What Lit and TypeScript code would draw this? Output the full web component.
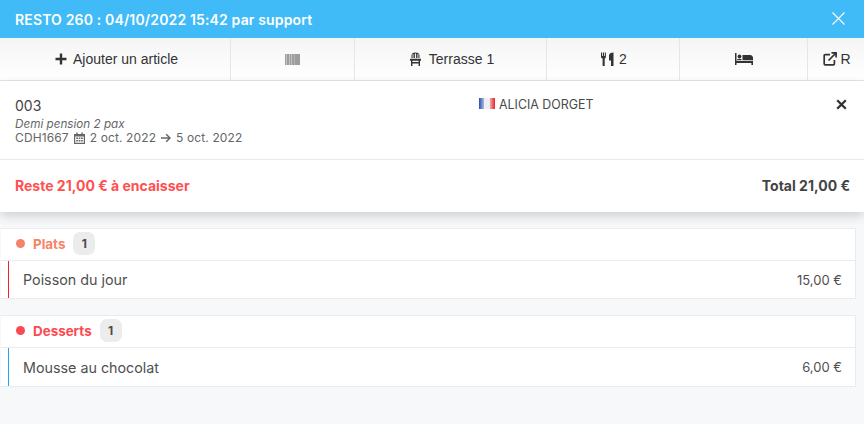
import { LitElement, html, css } from "lit";
import { customElement } from "lit/decorators.js";

@customElement("app-root")
export class AppRoot extends LitElement {
  static styles = css`
    :host { display: block; width: 864px; height: 424px; background: #f6f8fa; font-family: Inter, sans-serif; color: #4a4a4a; overflow: hidden; }
    svg { display: block; flex: none; }
    .top { height: 38px; background: #40bbf8; color: #fff; display: flex; align-items: center; justify-content: space-between; padding: 0 19px 0 15px; font-size: 14px; font-weight: 600; letter-spacing: .15px; box-sizing: border-box; }
    .top svg { margin-top: -2px; }
    .tools { height: 43px; box-sizing: border-box; display: flex; border-bottom: 1px solid #e6e6e6; background: linear-gradient(#f5f5f5, #fff); font-family: "Liberation Sans", sans-serif; font-size: 14px; color: #333; }
    .tool { display: flex; align-items: center; justify-content: center; gap: 6px; border-right: 1px solid #e6e6e6; box-sizing: border-box; }
    .tool:last-child { border-right: 0; }
    .t1 { width: 231px; padding-left: 3px; } .t2 { width: 124px; } .t3 { width: 192px; gap: 7px; padding-left: 2px; } .t4 { width: 133px; gap: 5px; padding-left: 2px; } .t5 { width: 128px; } .t6 { width: 56px; gap: 3px; padding-left: 2px; }
    .panel { background: #fff; height: 131px; box-shadow: 0 4px 10px rgba(0,0,0,.16); display: flex; flex-direction: column; }
    .info { height: 79px; box-sizing: border-box; border-bottom: 1px solid #e9e9e9; display: grid; grid-template-columns: 464px 1fr auto; padding: 16px 17px 0 15px; }
    .num { font-size: 14px; line-height: 18px; color: #444; }
    .sub { font-size: 11.7px; line-height: 14px; color: #666; font-style: italic; margin-top: 2px; }
    .ref { font-size: 12px; line-height: 14px; color: #666; display: flex; align-items: center; gap: 5px; letter-spacing: .12px; }
    .guest { display: flex; align-items: flex-start; gap: 4px; font-size: 12.4px; line-height: 16px; color: #4a4a4a; }
    .flag { width: 16px; height: 11px; margin-top: 1px; display: flex; box-sizing: border-box; }
    .flag i { flex: 1; }
    .b { background: linear-gradient(90deg, #2a4fa8, #a9bce6); } .w { background: #eceef2; } .r { background: linear-gradient(90deg, #f4a8a8, #e8202a); }
    .foot { flex: 1; display: flex; align-items: center; justify-content: space-between; padding: 0 14px 2px 15px; font-size: 14px; font-weight: 700; color: #444; }
    .due { color: #ff5050; }
    .group { margin: 16px 8px 0 0; background: #fff; border: 1px solid #e9ebee; border-left-color: #f6f8fa; }
    .gh { height: 32px; box-sizing: border-box; display: flex; align-items: center; padding: 0 0 2px 15px; font-size: 13.4px; font-weight: 700; border-bottom: 1px solid #e9ebee; }
    .dot { width: 9px; height: 9px; border-radius: 50%; margin-right: 8px; background: currentColor; }
    .count { margin-left: 8px; width: 22px; height: 23px; border-radius: 7px; background: #ececec; color: #4a4a4a; font-size: 12px; display: flex; align-items: center; justify-content: center; }
    .plats { color: #f5836a; } .desserts { color: #fb4a52; }
    .row { margin-left: 7px; height: 37px; display: flex; align-items: center; justify-content: space-between; padding: 0 13px 0 14px; border-left: 1px solid; font-size: 14.3px; color: #4f4f4f; }
    .row.tall { height: 38px; }
    .red { border-left-color: #f5222d; } .blue { border-left-color: #1aa9f5; }
    .price { font-size: 13px; }
  `;

  render() {
    return html`
      <div class="top">
        <span>RESTO 260 : 04/10/2022 15:42 par support</span>
        <svg width="13" height="13" viewBox="0 0 13 13"><path d="M.5.5l12 12M12.5.5l-12 12" stroke="#fff" stroke-width="1.1" fill="none"/></svg>
      </div>
      <div class="tools">
        <div class="tool t1">
          <svg width="12" height="12" viewBox="0 0 12 12"><path d="M6 .5v11M.5 6h11" stroke="#333" stroke-width="2.4"/></svg>
          <span>Ajouter un article</span>
        </div>
        <div class="tool t2">
          <svg width="15" height="11" viewBox="0 0 15 11"><rect width="15" height="11" fill="#9c9c9c"/><path d="M1.5 0v11M4.5 0v11M6.5 0v11" stroke="#c4c4c4"/><path d="M9.5 0v11" stroke="#b4b4b4"/></svg>
        </div>
        <div class="tool t3">
          <svg width="13" height="14" viewBox="0 0 13 14" fill="#333"><path d="M2.5 6V3.5C2.5 1.5 4 .5 6.5.5s4 1 4 3V6H9.4V2H8.5v4h-1.4V1.6H5.9V6H4.5V2h-.9v4zM1 6.8h11v2H11V14H9.6v-2.6H3.4V14H2V8.8H1zM3.4 8.8v1.3h6.2V8.8z"/></svg>
          <span>Terrasse 1</span>
        </div>
        <div class="tool t4">
          <svg width="13" height="14" viewBox="0 0 13 14" fill="#333"><path d="M0 .5h1.1v3.5h.8V.5h1.1v3.5h.8V.5h1.1v4.6c0 .8-.5 1.3-1.2 1.5V14H1.6V6.6C.7 6.3 0 5.8 0 5.1zM12.5.5V14H10V8.6H8V3.6C8 1.6 10 .5 12.5.5z"/></svg>
          <span>2</span>
        </div>
        <div class="tool t5">
          <svg width="18" height="12" viewBox="0 0 18 12" fill="#333"><path d="M0 0h1.5v8h16.5v4h-1.6v-2H1.5v2H0z"/><circle cx="4.5" cy="3.5" r="1.9"/><path d="M7.5 2h7.5c1.7 0 3 1.2 3 3v2.2H7.5zM2.2 6h4.3v1.2H2.2z"/></svg>
        </div>
        <div class="tool t6">
          <svg width="14" height="14" viewBox="0 0 14 14" fill="none" stroke="#333" stroke-width="1.7"><path d="M7 2.6H2.2a1 1 0 0 0-1 1v8.2a1 1 0 0 0 1 1h8.2a1 1 0 0 0 1-1V8"/><path d="M5.5 8.5L13 1M8.5.9h4.6v4.6"/></svg>
          <span>R</span>
        </div>
      </div>
      <div class="panel">
        <div class="info">
          <div>
            <div class="num">003</div>
            <div class="sub">Demi pension 2 pax</div>
            <div class="ref">
              <span>CDH1667</span>
              <svg width="11" height="12" viewBox="0 0 11 12" fill="#666"><path d="M0 2h2.2V.5h1.4V2h3.8V.5h1.4V2H11v10H0zM1.2 4.5v6.3h8.6V4.5z"/><path d="M2.2 5.5h1.7v1.6H2.2zM4.7 5.5h1.7v1.6H4.7zM7.1 5.5h1.7v1.6H7.1zM2.2 8h1.7v1.6H2.2zM4.7 8h1.7v1.6H4.7zM7.1 8h1.7v1.6H7.1z"/></svg>
              <span>2 oct. 2022</span>
              <svg width="10" height="10" viewBox="0 0 10 10" fill="none" stroke="#666" stroke-width="1.5"><path d="M0 5h9M5.2 1.2L9 5 5.2 8.8"/></svg>
              <span>5 oct. 2022</span>
            </div>
          </div>
          <div class="guest">
            <span class="flag"><i class="b"></i><i class="w"></i><i class="r"></i></span>
            <span>ALICIA DORGET</span>
          </div>
          <svg width="11" height="11" viewBox="0 0 11 11" style="margin-top:2px"><path d="M1.2 1.2l8.6 8.6M9.8 1.2l-8.6 8.6" stroke="#333" stroke-width="2.3"/></svg>
        </div>
        <div class="foot">
          <span class="due">Reste 21,00 € à encaisser</span>
          <span>Total 21,00 €</span>
        </div>
      </div>
      <div class="group">
        <div class="gh plats"><span class="dot"></span><span>Plats</span><span class="count">1</span></div>
        <div class="row red"><span>Poisson du jour</span><span class="price">15,00 €</span></div>
      </div>
      <div class="group">
        <div class="gh desserts"><span class="dot"></span><span>Desserts</span><span class="count">1</span></div>
        <div class="row tall blue"><span>Mousse au chocolat</span><span class="price">6,00 €</span></div>
      </div>
    `;
  }
}
